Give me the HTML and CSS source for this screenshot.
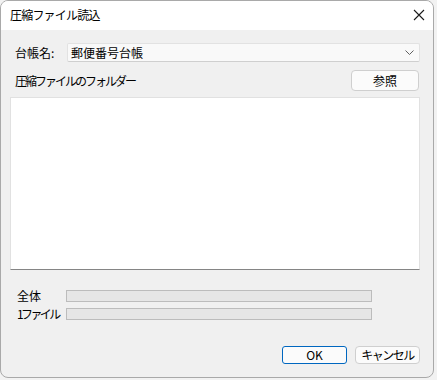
FILE: index.html
```html
<!DOCTYPE html>
<html lang="ja">
<head>
<meta charset="utf-8">
<link rel="stylesheet" href="styles.css">
</head>
<body>
<div class="window">
  <div class="titlebar">
    <span class="title">圧縮ファイル読込</span>
    <svg class="close" width="12" height="12" viewBox="0 0 12 12"><path d="M1 1L11 11M11 1L1 11" stroke="#1a1a1a" stroke-width="1.1" fill="none"/></svg>
  </div>
  <div class="content">
    <div class="name-row">
      <span class="label name-label">台帳名:</span>
      <div class="combo">
        <span class="combo-text">郵便番号台帳</span>
        <svg class="chevron" width="9" height="5" viewBox="0 0 9 5"><path d="M0.5 0.5L4.5 4.5L8.5 0.5" stroke="#606060" stroke-width="1" fill="none"/></svg>
      </div>
    </div>
    <div class="folder-row">
      <span class="label folder-label">圧縮ファイルのフォルダー</span>
      <button class="btn browse">参照</button>
    </div>
    <div class="listbox"></div>
    <div class="progress-row first">
      <span class="label prog-label">全体</span>
      <div class="bar"></div>
    </div>
    <div class="progress-row">
      <span class="label prog-label"><span class="narrow">1ファイル</span></span>
      <div class="bar"></div>
    </div>
    <div class="buttons">
      <button class="btn ok">OK</button>
      <button class="btn cancel">キャンセル</button>
    </div>
  </div>
</div>
</body>
</html>
```
FILE: styles.css
```css
* { box-sizing: border-box; }
html, body { margin: 0; padding: 0; }
body {
  width: 437px;
  height: 380px;
  background: #f2f2f2;
  font-family: "Noto Sans CJK JP", "Noto Sans", sans-serif;
  font-size: 12px;
  color: #000;
  overflow: hidden;
}
.window {
  width: 434px;
  height: 378px;
  background: #f0f0f0;
  border: 1px solid #a9a9a9;
  border-radius: 8px;
  overflow: hidden;
  display: flex;
  flex-direction: column;
}
.titlebar {
  height: 29px;
  flex: none;
  background: #ffffff;
  display: flex;
  align-items: center;
  justify-content: space-between;
  padding: 0 8px 2px 9px;
}
.title { font-size: 12px; letter-spacing: -0.8px; }
.content {
  display: flex;
  flex-direction: column;
  padding: 0 13px 0 9px;
}
.label { line-height: 14px; white-space: nowrap; }
.name-row {
  margin-top: 13px;
  display: flex;
  align-items: center;
}
.name-label { margin-left: 5px; width: 52px; }
.combo {
  flex: 1;
  height: 19px;
  background: #f9f9f9;
  border: 1px solid #e2e2e2;
  border-bottom-color: #cfcfcf;
  border-radius: 2px;
  display: flex;
  align-items: center;
  justify-content: space-between;
  padding: 0 5px 0 3px;
}
.combo-text { font-size: 12px; }
.folder-row {
  margin-top: 8px;
  display: flex;
  align-items: center;
  justify-content: space-between;
}
.folder-label { margin-left: 5px; letter-spacing: -2px; }
.btn {
  font-family: inherit;
  font-size: 12px;
  background: #fbfbfb;
  border: 1px solid #cfcfcf;
  border-radius: 4px;
  padding: 0;
  color: #000;
  line-height: 14px;
}
.browse { width: 68px; height: 21px; margin-right: 1px; }
.listbox {
  margin-top: 6px;
  height: 173px;
  background: #ffffff;
  border: 1px solid #e1e1e1;
  border-bottom: 1px solid #858585;
}
.progress-row {
  margin-top: 6px;
  display: flex;
  align-items: center;
  height: 12px;
}
.progress-row.first { margin-top: 20px; }
.prog-label { width: 56px; padding-left: 7px; }
.narrow { letter-spacing: -2.6px; }
.bar {
  width: 306px;
  height: 12px;
  background: #e6e6e6;
  border: 1px solid #bcbcbc;
}
.buttons {
  margin-top: 26px;
  display: flex;
  justify-content: flex-end;
  gap: 8px;
}
.ok, .cancel { width: 65px; height: 18px; }
.ok { border-color: #0067c0; border-radius: 3px; }
.cancel { letter-spacing: -1.5px; }
```
